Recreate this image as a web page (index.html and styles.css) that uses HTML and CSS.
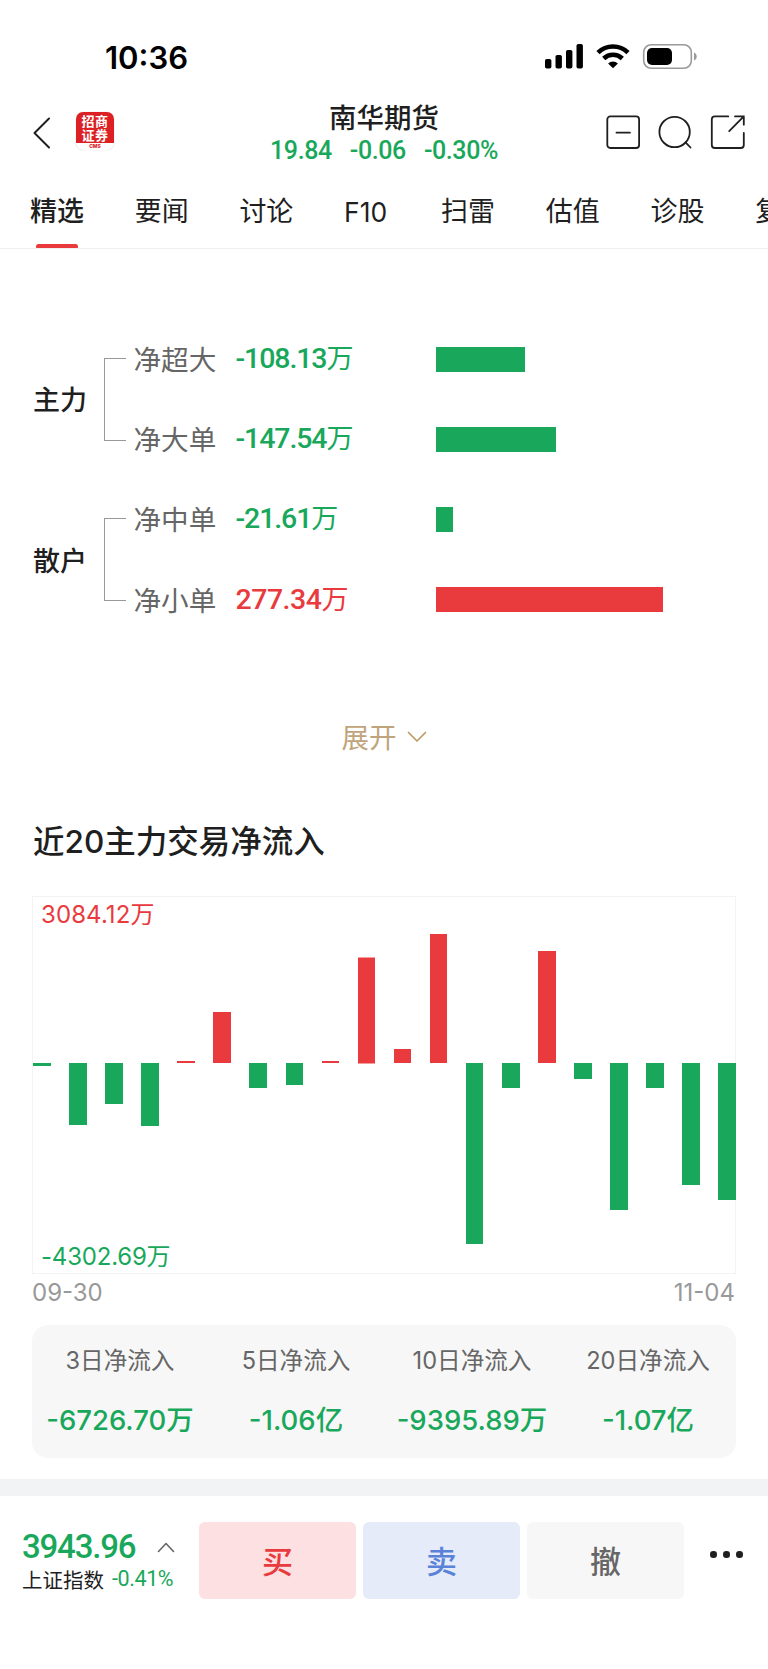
FILE: index.html
```html
<!DOCTYPE html>
<html lang="zh-CN">
<head>
    <meta charset="UTF-8">
    <meta name="viewport" content="width=device-width, initial-scale=1.0">
    <title>南华期货</title>
    <link rel="stylesheet" href="styles.css">
</head>
<body>
    <div class="status-bar">
        <span class="time">10:36</span>
        <svg class="status-icons" width="154" height="28" viewBox="0 0 154 28">
            <rect x="1" y="17" width="6.4" height="9.5" rx="1.8"/>
            <rect x="11.5" y="13" width="6.4" height="13.5" rx="1.8"/>
            <rect x="22" y="8" width="6.4" height="18.5" rx="1.8"/>
            <rect x="32.5" y="2" width="6.4" height="24.5" rx="1.8"/>
            <g fill="none" stroke="#000" stroke-width="4.6">
                <path d="M54 10.6a21.5 21.5 0 0 1 30 0"/>
                <path d="M59.7 16.5a13.5 13.5 0 0 1 18.6 0"/>
            </g>
            <path d="M69 26.3l-4.9-4.9a7 7 0 0 1 9.8 0z"/>
            <rect x="99.7" y="2.7" width="47.6" height="23.6" rx="7.6" fill="none" stroke="#9a9a9a" stroke-width="1.6"/>
            <rect x="103" y="6" width="25" height="17" rx="5"/>
            <path d="M150 10.5c3.6 1.3 3.6 6.7 0 8z" fill="#9a9a9a"/>
        </svg>
    </div>

    <header class="header">
        <div class="header-left">
            <svg width="18" height="32" viewBox="0 0 18 32" fill="none" stroke="#1f1f1f" stroke-width="2" stroke-linecap="round" stroke-linejoin="round"><path d="M16 1.5L1.5 16 16 30.5"/></svg>
            <div class="logo">
                <div class="logo-name">招商<br>证券</div>
                <div class="logo-sub">CMS</div>
            </div>
        </div>
        <div class="stock">
            <h1>南华期货</h1>
            <div class="quote down"><span>19.84</span><span>-0.06</span><span>-0.30%</span></div>
        </div>
        <svg class="header-icons" width="140" height="36" viewBox="0 0 140 36" fill="none" stroke="#1f1f1f" stroke-width="1.8" stroke-linecap="round">
            <rect x="1.3" y="1.4" width="31.8" height="31.6" rx="3"/>
            <path d="M10.5 17.7h13.4"/>
            <circle cx="68.6" cy="17" r="15.2"/>
            <path d="M79.5 27.3l5 5.2"/>
            <path d="M122.3 1.4h-13.5a3 3 0 0 0-3 3V30a3 3 0 0 0 3 3h26a3 3 0 0 0 3-3V18"/>
            <path d="M129 1.4h8.8v8.3M137.8 1.4l-14.6 14.8"/>
        </svg>
    </header>

    <nav class="tabs">
        <a class="tab active">精选</a>
        <a class="tab">要闻</a>
        <a class="tab">讨论</a>
        <a class="tab tab-f10">F10</a>
        <a class="tab">扫雷</a>
        <a class="tab">估值</a>
        <a class="tab">诊股</a>
        <a class="tab">复</a>
    </nav>

    <section class="flow">
        <div class="flow-group">
            <div class="group-name">主力</div>
            <div class="bracket"></div>
            <div class="rows">
                <div class="row"><span class="label">净超大</span><span class="value down">-108.13<i>万</i></span><div class="hbar down-bg" style="width:89px"></div></div>
                <div class="row"><span class="label">净大单</span><span class="value down">-147.54<i>万</i></span><div class="hbar down-bg" style="width:120px"></div></div>
            </div>
        </div>
        <div class="flow-group">
            <div class="group-name">散户</div>
            <div class="bracket"></div>
            <div class="rows">
                <div class="row"><span class="label">净中单</span><span class="value down">-21.61<i>万</i></span><div class="hbar down-bg" style="width:17px"></div></div>
                <div class="row"><span class="label">净小单</span><span class="value up">277.34<i>万</i></span><div class="hbar up-bg" style="width:227px"></div></div>
            </div>
        </div>
    </section>

    <div class="expand">
        <span>展开</span>
        <svg width="20" height="12" viewBox="0 0 20 12" fill="none" stroke="#bf9a63" stroke-width="1.7" stroke-linecap="round" stroke-linejoin="round"><path d="M1.5 1.5L10 10l8.5-8.5"/></svg>
    </div>

    <h2>近20主力交易净流入</h2>

    <div class="chart">
        <span class="chart-max up">3084.12万</span>
        <div class="bars" id="bars"></div>
        <span class="chart-min down">-4302.69万</span>
    </div>
    <div class="dates"><span>09-30</span><span>11-04</span></div>

    <div class="summary">
        <div class="sum-item"><p>3日净流入</p><b>-6726.70万</b></div>
        <div class="sum-item"><p>5日净流入</p><b>-1.06亿</b></div>
        <div class="sum-item"><p>10日净流入</p><b>-9395.89万</b></div>
        <div class="sum-item"><p>20日净流入</p><b>-1.07亿</b></div>
    </div>

    <footer class="footer">
        <div class="index">
            <div class="index-top">
                <span class="index-value down">3943.96</span>
                <svg width="18" height="11" viewBox="0 0 18 11" fill="none" stroke="#666" stroke-width="1.6" stroke-linecap="round" stroke-linejoin="round"><path d="M1.5 9.5L9 1.5l7.5 8"/></svg>
            </div>
            <div class="index-bottom"><span class="index-name">上证指数</span><span class="index-pct down">-0.41%</span></div>
        </div>
        <button class="btn buy">买</button>
        <button class="btn sell">卖</button>
        <button class="btn cancel">撤</button>
        <div class="more"><i></i><i></i><i></i></div>
    </footer>

    <script>
        // bar heights in px, positive = inflow
        const data = [-2.5, -62, -40.5, -62.5, 2, 51, -24.5, -21.7, 2, 105.5, 14, 129, -180.5, -24.5, 112, -16, -147, -25, -121.5, -136.5];
        const bars = document.getElementById('bars');

        data.forEach(v => {
            const bar = document.createElement('div');
            bar.className = v > 0 ? 'bar bar-up' : 'bar bar-down';
            bar.style.height = Math.abs(v) + 'px';
            bars.appendChild(bar);
        });
    </script>
</body>
</html>
```
FILE: styles.css
```css
* { box-sizing: border-box; }
body { margin: 0; width: 768px; height: 1669px; overflow: hidden; background: #fff; color: #1f1f1f; font-family: Inter, "Noto Sans CJK SC", sans-serif; }
h1, h2, p { margin: 0; font-weight: 500; }
i { font-style: normal; }
svg { display: block; flex: none; }
.up { color: #e93a3e; }
.down { color: #19a85b; }
.up-bg { background: #e93a3e; }
.down-bg { background: #19a85b; }

.status-bar { height: 100px; padding: 42px 70px 0 105px; display: flex; justify-content: space-between; align-items: flex-start; }
.time { font-size: 31px; line-height: 31px; font-weight: 600; color: #000; }
.status-icons { fill: #000; }

.header { height: 82px; padding: 0 22px 0 33px; display: grid; grid-template-columns: 200px 1fr 200px; }
.header-left { display: flex; gap: 25px; align-items: center; height: 65px; }
.logo { width: 38px; height: 38px; border-radius: 7px; overflow: hidden; background: #fff; box-shadow: 0 0 1px #bbb; margin-top: -3px; text-align: center; }
.logo-name { height: 31px; padding-top: 2px; background: #dc2023; color: #fff; font-size: 13px; line-height: 14px; letter-spacing: 0.5px; font-weight: 700; }
.logo-sub { height: 7px; font-size: 5px; line-height: 7px; font-weight: 800; color: #dc2023; }
.stock { text-align: center; margin-left: -11px; }
h1 { margin-top: 1px; font-size: 27.5px; line-height: 34px; white-space: nowrap; }
.quote { display: flex; justify-content: center; gap: 18px; margin-top: 1px; font-family: Roboto, sans-serif; font-size: 25px; line-height: 30px; font-weight: 500; letter-spacing: -0.4px; white-space: nowrap; }
.header-icons { margin: 15px 0 0 60px; }

.tabs { height: 67px; padding-left: 30px; display: flex; gap: 50px; border-bottom: 1px solid #f0f0f0; font-size: 27px; line-height: 60px; white-space: nowrap; overflow: hidden; }
.tab { flex: none; width: 54.7px; }
.tab-f10 { width: 47px; font-size: 26.5px; }
.tab.active { font-weight: 500; }
.tab.active::after { content: ""; display: block; width: 42px; height: 5px; margin: 2px 0 0 6px; border-radius: 3px; background: #e93a3e; }

.flow { padding: 70px 0 0 33px; }
.flow-group { display: flex; align-items: center; height: 160.4px; }
.group-name { width: 71px; margin-top: -1px; font-size: 27px; font-weight: 500; }
.bracket { width: 21.5px; height: 83px; border: 1.5px solid #999; border-right: 0; margin-right: 8px; }
.row { display: flex; align-items: center; height: 80.2px; }
.label { width: 102px; margin-top: -2px; font-size: 27.6px; color: #666; }
.value { width: 200px; margin-top: -5px; font-family: Roboto, "Noto Sans CJK SC", sans-serif; font-size: 28.5px; font-weight: 500; white-space: nowrap; }
.value.down { letter-spacing: -1.1px; }
.value.up { letter-spacing: -0.5px; }
.value i { font-weight: 400; font-size: 27px; }
.hbar { height: 25px; }

.expand { height: 40px; margin-top: 77px; display: flex; align-items: center; justify-content: center; gap: 10px; font-size: 27.5px; color: #bfa47c; }
.expand span { margin-top: -2px; }
h2 { margin: 64.5px 0 0 33px; height: 40px; line-height: 41px; font-size: 31.5px; }

.chart { position: relative; width: 704px; height: 378px; margin: 35px 0 0 32px; border: 1px solid #f3f3f3; font-size: 24px; }
.chart-max, .chart-min { position: absolute; left: 8px; line-height: 30px; }
.chart-max { top: 3px; letter-spacing: 0.1px; }
.chart-min { bottom: 1px; letter-spacing: -0.2px; }
.bars { display: flex; justify-content: space-between; align-items: flex-start; height: 100%; padding-top: 166px; margin-right: -1px; }
.bar { width: 17.5px; }
.bar-up { background: #e93a3e; transform: translateY(-100%); }
.bar-down { background: #19a85b; }
.dates { display: flex; justify-content: space-between; padding: 2px 33px 0 32px; height: 51px; font-size: 24px; line-height: 33px; color: #999; }

.summary { display: flex; width: 704px; height: 133px; margin-left: 32px; border-radius: 16px; background: #f7f7f7; text-align: center; }
.sum-item { flex: 1; white-space: nowrap; }
.sum-item p { margin-top: 18px; font-size: 23.6px; line-height: 36px; font-weight: 400; color: #666; }
.sum-item b { display: block; margin-top: 21px; font-size: 27.5px; line-height: 40px; font-weight: 500; color: #19a85b; }

.footer { display: flex; margin-top: 21px; border-top: 17px solid #f2f3f5; padding: 26px 0 0 22px; }
.index { width: 177px; }
.index-top { display: flex; align-items: center; justify-content: space-between; padding-right: 24px; margin-top: 8px; height: 34px; }
.index-value { font: 500 33px/34px Roboto, sans-serif; letter-spacing: -1.2px; }
.index-bottom { display: flex; gap: 8px; align-items: center; height: 30px; white-space: nowrap; }
.index-name { margin-top: -1px; font-size: 20.5px; }
.index-pct { font: 400 21.5px/30px Roboto, sans-serif; letter-spacing: -0.4px; }
.btn { width: 157px; height: 77px; margin-right: 7px; padding: 0 0 3px; border: 0; border-radius: 6px; font-family: "Noto Sans CJK SC", sans-serif; font-size: 31px; font-weight: 500; }
.buy { background: #fce0e2; color: #e93a3e; }
.sell { background: #e5ebf8; color: #5a83d8; }
.cancel { background: #f7f7f7; color: #666; }
.more { display: flex; gap: 6.5px; margin: 29px 0 0 19px; }
.more i { width: 6.5px; height: 6.5px; border-radius: 50%; background: #1f1f1f; }
```
